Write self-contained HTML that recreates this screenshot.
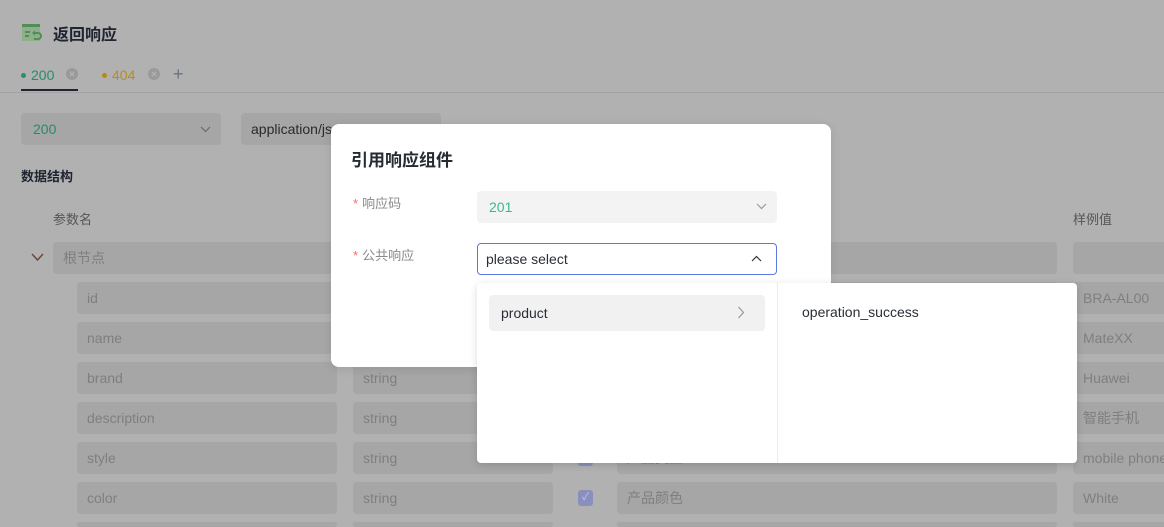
<!DOCTYPE html>
<html style="width:1164px;height:527px;overflow:hidden"><head><meta charset="utf-8"><style>
*{box-sizing:border-box;margin:0;padding:0}
body{width:1164px;height:527px;overflow:hidden;background:#b1b1b1;font-family:"Liberation Sans","Noto Sans CJK SC",sans-serif;position:relative}
.a{position:absolute}
.f{position:absolute;background:#a6a6a6;border-radius:4px;height:32px;line-height:32px;padding-left:10px;color:#7f7f7f;font-size:14px;white-space:nowrap;overflow:hidden}
.cb{position:absolute;width:15px;height:16px;border-radius:3px;background:#8990bd}
.lbl{position:absolute;font-size:13px;color:#8a8a8a}
.lbl b{color:#f56c6c;font-weight:normal;margin-right:4px}
</style></head><body>
<svg class="a" style="left:22px;top:24px" width="22" height="17" viewBox="0 0 22 17"><rect x="0" y="0" width="18" height="17" fill="#8fae8c"/><rect x="0" y="0" width="18" height="3" fill="#4f8e55"/><rect x="3" y="7" width="5" height="2" fill="#4f8e55"/><rect x="3" y="11" width="4" height="2" fill="#4f8e55"/><path d="M12 9 h4 a3 3 0 0 1 0 6 h-4" stroke="#4f8e55" stroke-width="2" fill="none"/><path d="M10 9 l3 -2.5 v5z" fill="#4f8e55"/></svg>
<div class="a" style="left:53px;top:21px;font-size:16px;font-weight:bold;color:#1f2430">返回响应</div>
<div class="a" style="left:21px;top:73px;width:5px;height:5px;border-radius:50%;background:#2f8c6c"></div>
<div class="a" style="left:31px;top:67px;font-size:14px;color:#2b8a6a">200</div>
<svg class="a" style="left:66px;top:68px" width="12" height="12"><circle cx="6" cy="6" r="6" fill="#9a9a9a"/><path d="M3.8 3.8 L8.2 8.2 M8.2 3.8 L3.8 8.2" stroke="#b8b8b8" stroke-width="1"/></svg>
<div class="a" style="left:102px;top:73px;width:5px;height:5px;border-radius:50%;background:#b58a10"></div>
<div class="a" style="left:112px;top:67px;font-size:14px;color:#b68c1a">404</div>
<svg class="a" style="left:148px;top:68px" width="12" height="12"><circle cx="6" cy="6" r="6" fill="#9a9a9a"/><path d="M3.8 3.8 L8.2 8.2 M8.2 3.8 L3.8 8.2" stroke="#b8b8b8" stroke-width="1"/></svg>
<div class="a" style="left:173px;top:64px;font-size:18px;color:#6a7280">+</div>
<div class="a" style="left:0;top:92px;width:1164px;height:1px;background:#a2a2a2"></div>
<div class="a" style="left:21px;top:89px;width:57px;height:2px;background:#1f2430"></div>
<div class="f" style="left:21px;top:113px;width:200px;color:#2b8a6a;padding-left:12px">200</div>
<svg class="a" style="left:200px;top:126px" width="11" height="7"><path d="M1 1 L5.5 5.5 L10 1" stroke="#6a6a6a" stroke-width="1.2" fill="none"/></svg>
<div class="f" style="left:241px;top:113px;width:200px;color:#2a2a2a">application/json</div>
<div class="a" style="left:21px;top:166px;font-size:13px;font-weight:bold;color:#1f2430">数据结构</div>
<div class="a" style="left:53px;top:209px;font-size:13px;color:#555">参数名</div>
<div class="a" style="left:1073px;top:209px;font-size:13px;color:#555">样例值</div>
<svg class="a" style="left:31px;top:253px" width="13" height="9"><path d="M1 1 L6.5 7 L12 1" stroke="#6a4a3a" stroke-width="1.5" fill="none"/></svg>
<div class="f" style="left:53px;top:242px;width:1004px">根节点</div>
<div class="f" style="left:1073px;top:242px;width:100px"></div>

<div class="f" style="left:77px;top:282px;width:260px">id</div><div class="f" style="left:353px;top:282px;width:200px">string</div><div class="f" style="left:617px;top:282px;width:440px"></div><div class="f" style="left:1073px;top:282px;width:100px">BRA-AL00</div>
<div class="f" style="left:77px;top:322px;width:260px">name</div><div class="f" style="left:353px;top:322px;width:200px">string</div><div class="f" style="left:617px;top:322px;width:440px"></div><div class="f" style="left:1073px;top:322px;width:100px">MateXX</div>
<div class="f" style="left:77px;top:362px;width:260px">brand</div><div class="f" style="left:353px;top:362px;width:200px">string</div><div class="f" style="left:617px;top:362px;width:440px"></div><div class="f" style="left:1073px;top:362px;width:100px">Huawei</div>
<div class="f" style="left:77px;top:402px;width:260px">description</div><div class="f" style="left:353px;top:402px;width:200px">string</div><div class="f" style="left:617px;top:402px;width:440px"></div><div class="f" style="left:1073px;top:402px;width:100px">智能手机</div>
<div class="f" style="left:77px;top:442px;width:260px">style</div><div class="f" style="left:353px;top:442px;width:200px">string</div><div class="cb" style="left:578px;top:450px"></div><div class="f" style="left:617px;top:442px;width:440px">产品类型</div><div class="f" style="left:1073px;top:442px;width:100px">mobile phone</div>
<div class="f" style="left:77px;top:482px;width:260px">color</div><div class="f" style="left:353px;top:482px;width:200px">string</div><div class="cb" style="left:578px;top:490px;color:#c8cbe0;font-size:10px;text-align:center;line-height:16px">✓</div><div class="f" style="left:617px;top:482px;width:440px">产品颜色</div><div class="f" style="left:1073px;top:482px;width:100px">White</div>
<div class="f" style="left:77px;top:522px;width:260px;height:5px"></div><div class="f" style="left:353px;top:522px;width:200px;height:5px"></div><div class="f" style="left:617px;top:522px;width:440px;height:5px"></div><div class="f" style="left:1073px;top:522px;width:100px;height:5px"></div>

<div class="a" style="left:331px;top:124px;width:500px;height:243px;background:#fff;border-radius:8px;box-shadow:0 2px 10px rgba(0,0,0,.1)"></div>
<div class="a" style="left:351px;top:146px;font-size:17px;font-weight:bold;color:#252a33">引用响应组件</div>
<div class="lbl" style="left:353px;top:193px"><b>*</b>响应码</div>
<div class="lbl" style="left:353px;top:245px"><b>*</b>公共响应</div>
<div class="a" style="left:477px;top:191px;width:300px;height:32px;background:#f3f3f3;border-radius:4px;font-size:14px;line-height:32px;padding-left:12px;color:#3cb98a">201</div>
<svg class="a" style="left:756px;top:203px" width="11" height="7"><path d="M1 1 L5.5 5.5 L10 1" stroke="#999" stroke-width="1.2" fill="none"/></svg>
<div class="a" style="left:477px;top:243px;width:300px;height:32px;background:#fff;border:1px solid #5a7ae0;border-radius:4px;font-size:14px;line-height:30px;padding-left:8px;color:#2a2e36">please select</div>
<svg class="a" style="left:751px;top:255px" width="11" height="7"><path d="M1 6 L5.5 1.5 L10 6" stroke="#333" stroke-width="1.2" fill="none"/></svg>
<div class="a" style="left:477px;top:283px;width:600px;height:180px;background:#fff;border-radius:4px;box-shadow:0 2px 8px rgba(0,0,0,.15)"></div>
<div class="a" style="left:777px;top:283px;width:1px;height:180px;background:#ececec"></div>
<div class="a" style="left:489px;top:295px;width:276px;height:36px;background:#f1f1f1;border-radius:4px;font-size:14px;line-height:36px;padding-left:12px;color:#2a2e36">product</div>
<svg class="a" style="left:737px;top:306px" width="8" height="13"><path d="M1.5 1 L6.5 6.5 L1.5 12" stroke="#999" stroke-width="1.2" fill="none"/></svg>
<div class="a" style="left:802px;top:304px;font-size:14px;color:#2a2e36">operation_success</div>
</body></html>
